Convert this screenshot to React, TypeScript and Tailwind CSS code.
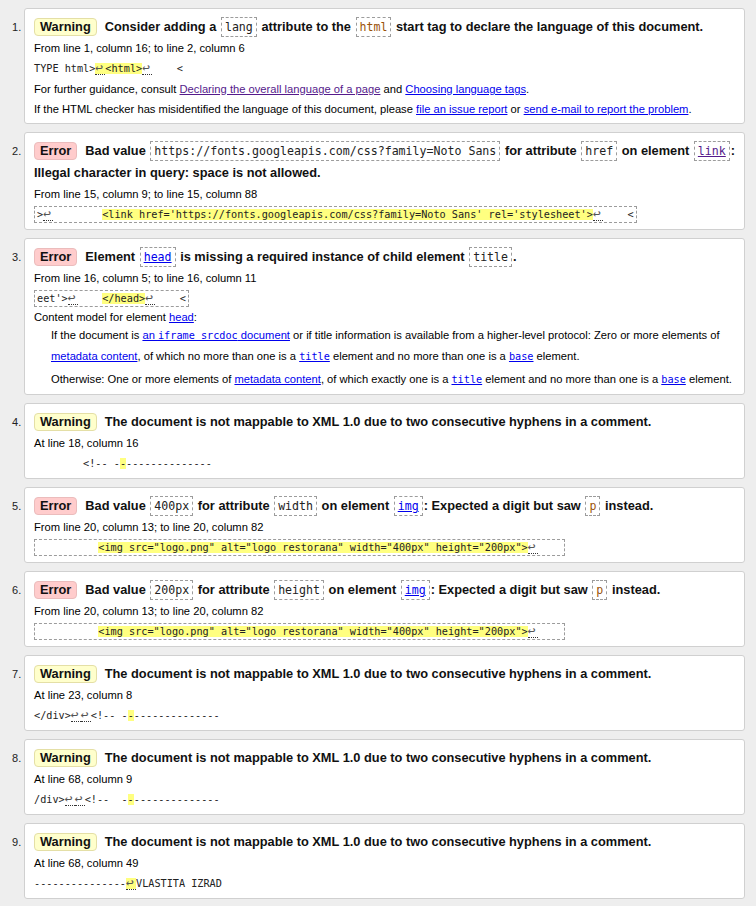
import React from 'react';

// checker results page: numbered list of message cards
const sans = "font-['Liberation_Sans',Arial,sans-serif]";
const mono = "font-['DejaVu_Sans_Mono','Liberation_Mono',monospace]";

type Kind = 'Warning' | 'Error';

const Badge: React.FC<{ kind: Kind }> = ({ kind }) => (
  <span
    className={
      kind === 'Warning'
        ? 'inline-block align-top mt-[2px] mr-[8px] h-[18px] leading-[16px] px-[5px] rounded-[4px] border border-[#e4dfa6] bg-[#ffffcc]'
        : 'inline-block align-top mt-[2px] mr-[8px] h-[18px] leading-[16px] px-[5px] rounded-[4px] border border-[#ebbcbc] bg-[#ffcccc]'
    }
  >
    {kind}
  </span>
);

// inline code box inside the headline
const Tok: React.FC<{ children: React.ReactNode; tone?: 'plain' | 'brown' }> = ({ children, tone = 'plain' }) => (
  <code
    className={`inline-block align-top mt-[1px] mx-[1px] h-[20px] leading-[18px] px-[3px] border border-dashed border-[#9c9c9c] text-[11.6px] font-normal ${mono} ${
      tone === 'brown' ? 'text-[#9a5208]' : 'text-[#222]'
    }`}
  >
    {children}
  </code>
);

const Link: React.FC<{ children: React.ReactNode; visited?: boolean }> = ({ children, visited }) => (
  <a className={visited ? 'text-[#551a8b] underline' : 'text-[#0000ee] underline'}>{children}</a>
);

const Hl: React.FC<{ children: React.ReactNode }> = ({ children }) => <span className="bg-[#ffff80]">{children}</span>;

const Lf = () => (
  <span className="inline-block w-[10px] leading-[12px] text-[13px] text-[#555] border-b border-dotted border-[#333]">↩</span>
);

const Line: React.FC<{ children: React.ReactNode; h?: 'tall' | 'short' }> = ({ children, h = 'tall' }) => (
  <div
    className={
      h === 'tall'
        ? 'h-[21px] leading-[21px] text-[11.2px] text-black whitespace-nowrap'
        : 'h-[20px] leading-[20px] text-[11.2px] text-black whitespace-nowrap'
    }
  >
    {children}
  </div>
);

const Extract: React.FC<{ children: React.ReactNode }> = ({ children }) => (
  <div className={`h-[20px] leading-[20px] whitespace-pre text-[10.2px] text-[#222] ${mono}`}>{children}</div>
);

const ExtractBox: React.FC<{ children: React.ReactNode }> = ({ children }) => (
  <div className="flex mt-[1px] mb-[2px] h-[17px]">
    <div
      className={`h-[17px] leading-[15px] px-[2px] border border-dashed border-[#9c9c9c] whitespace-pre text-[10.2px] text-[#222] ${mono}`}
    >
      {children}
    </div>
  </div>
);

const Card: React.FC<{ n: number; kind: Kind; head: React.ReactNode; nowrap?: boolean; children: React.ReactNode }> = ({
  n,
  kind,
  head,
  nowrap,
  children,
}) => (
  <li className="flex">
    <div className="w-[24px] shrink-0 pl-[12px] pt-[8px] leading-[22px] text-[11px] text-[#222]">{n}.</div>
    <div className="flex-1 min-w-0 bg-white border border-[#d0d0d0] rounded-[3px] pt-[7px] pb-[4px] px-[9px]">
      <div
        className={
          nowrap
            ? 'text-[12.8px] font-bold leading-[22px] text-[#111] whitespace-nowrap'
            : 'text-[12.8px] font-bold leading-[22px] text-[#111]'
        }
      >
        <Badge kind={kind} />
        {head}
      </div>
      {children}
    </div>
  </li>
);

const hyphens = 'The document is not mappable to XML 1.0 due to two consecutive hyphens in a comment.';

export default function App() {
  return (
    <div className={`min-h-[906px] bg-[#eeeeee] pt-2 pb-2 pr-[11px] ${sans}`}>
      <ol className="flex flex-col gap-2">
        <Card
          n={1}
          kind="Warning"
          head={
            <>
              Consider adding a <Tok>lang</Tok> attribute to the <Tok tone="brown">html</Tok> start tag to declare the
              language of this document.
            </>
          }
        >
          <Line>From line 1, column 16; to line 2, column 6</Line>
          <Extract>
            {'TYPE html>'}
            <Hl>
              <Lf />
              {'<html>'}
            </Hl>
            <Lf />
            {'    <'}
          </Extract>
          <Line h="short">
            For further guidance, consult <Link visited>Declaring the overall language of a page</Link> and{' '}
            <Link>Choosing language tags</Link>.
          </Line>
          <Line h="short">
            If the HTML checker has misidentified the language of this document, please{' '}
            <Link>file an issue report</Link> or <Link>send e-mail to report the problem</Link>.
          </Line>
        </Card>

        <Card
          n={2}
          kind="Error"
          nowrap
          head={
            <>
              Bad value <Tok>https://fonts.googleapis.com/css?family=Noto Sans</Tok> for attribute <Tok>href</Tok> on
              element{' '}
              <Tok>
                <Link visited>link</Link>
              </Tok>
              :
              <br />
              Illegal character in query: space is not allowed.
            </>
          }
        >
          <Line>From line 15, column 9; to line 15, column 88</Line>
          <ExtractBox>
            {'>'}
            <Lf />
            {'        '}
            <Hl>{"<link href='https://fonts.googleapis.com/css?family=Noto Sans' rel='stylesheet'>"}</Hl>
            <Lf />
            {'    <'}
          </ExtractBox>
        </Card>

        <Card
          n={3}
          kind="Error"
          head={
            <>
              Element{' '}
              <Tok>
                <Link>head</Link>
              </Tok>{' '}
              is missing a required instance of child element <Tok>title</Tok>.
            </>
          }
        >
          <Line>From line 16, column 5; to line 16, column 11</Line>
          <ExtractBox>
            {"eet'>"}
            <Lf />
            {'    '}
            <Hl>{'</head>'}</Hl>
            <Lf />
            {'    <'}
          </ExtractBox>
          <div className="mt-[2px] h-[16px] leading-[16px] text-[11.2px]">
            Content model for element <Link>head</Link>:
          </div>
          <div className="pl-[17px] text-[11.2px] leading-[21px] whitespace-nowrap">
            <div>
              If the document is{' '}
              <Link>
                an <code className={`text-[10.2px] ${mono}`}>iframe srcdoc</code> document
              </Link>{' '}
              or if title information is available from a higher-level protocol: Zero or more elements of
              <br />
              <Link>metadata content</Link>, of which no more than one is a{' '}
              <Link>
                <code className={`text-[10.2px] ${mono}`}>title</code>
              </Link>{' '}
              element and no more than one is a{' '}
              <Link>
                <code className={`text-[10.2px] ${mono}`}>base</code>
              </Link>{' '}
              element.
            </div>
            <div className="mt-[2px]">
              Otherwise: One or more elements of <Link>metadata content</Link>, of which exactly one is a{' '}
              <Link>
                <code className={`text-[10.2px] ${mono}`}>title</code>
              </Link>{' '}
              element and no more than one is a{' '}
              <Link>
                <code className={`text-[10.2px] ${mono}`}>base</code>
              </Link>{' '}
              element.
            </div>
          </div>
        </Card>

        <Card n={4} kind="Warning" head={hyphens}>
          <Line>At line 18, column 16</Line>
          <Extract>
            {'        <!-- -'}
            <Hl>-</Hl>
            {'--------------'}
          </Extract>
        </Card>

        {[
          { n: 5, v: '400px', attr: 'width' },
          { n: 6, v: '200px', attr: 'height' },
        ].map((m) => (
          <Card
            key={m.n}
            n={m.n}
            kind="Error"
            head={
              <>
                Bad value <Tok>{m.v}</Tok> for attribute <Tok>{m.attr}</Tok> on element{' '}
                <Tok>
                  <Link>img</Link>
                </Tok>
                : Expected a digit but saw <Tok tone="brown">p</Tok> instead.
              </>
            }
          >
            <Line>From line 20, column 13; to line 20, column 82</Line>
            <ExtractBox>
              {'          '}
              <Hl>{'<img src="logo.png" alt="logo restorana" width="400px" height="200px">'}</Hl>
              <Lf />
              {'    '}
            </ExtractBox>
          </Card>
        ))}

        <Card n={7} kind="Warning" head={hyphens}>
          <Line>At line 23, column 8</Line>
          <Extract>
            {'</div>'}
            <Lf />
            <Lf />
            {'<!-- -'}
            <Hl>-</Hl>
            {'--------------'}
          </Extract>
        </Card>

        <Card n={8} kind="Warning" head={hyphens}>
          <Line>At line 68, column 9</Line>
          <Extract>
            {'/div>'}
            <Lf />
            <Lf />
            {'<!--  -'}
            <Hl>-</Hl>
            {'--------------'}
          </Extract>
        </Card>

        <Card n={9} kind="Warning" head={hyphens}>
          <Line>At line 68, column 49</Line>
          <Extract>
            {'---------------'}
            <Hl>
              <Lf />
            </Hl>
            {'VLASTITA IZRAD'}
          </Extract>
        </Card>
      </ol>
    </div>
  );
}
